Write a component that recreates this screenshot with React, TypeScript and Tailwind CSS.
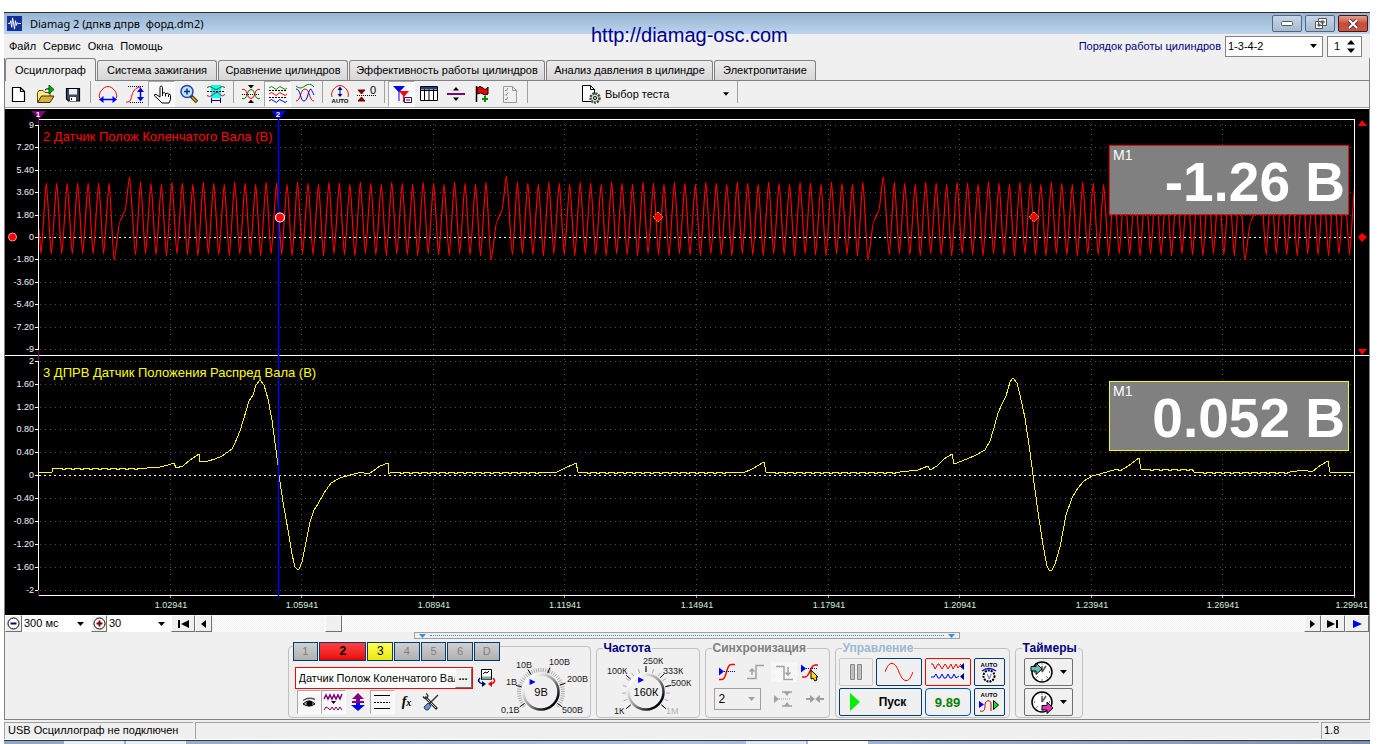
import type { ReactNode } from 'react'
import clsx from 'clsx'

const TABS = [
  { label: 'Осциллограф', width: 'w-[91px]' },
  { label: 'Система зажигания', width: 'w-[120px]' },
  { label: 'Сравнение цилиндров', width: 'w-[130px]' },
  { label: 'Эффективность работы цилиндров', width: 'w-[196px]' },
  { label: 'Анализ давления в цилиндре', width: 'w-[167px]' },
  { label: 'Электропитание', width: 'w-[102px]' },
]

const TIMES = ['1.02941', '1.05941', '1.08941', '1.11941', '1.14941', '1.17941', '1.20941', '1.23941', '1.26941']
const TIME_X = [170, 301, 433, 564, 696, 828, 959, 1091, 1222, 1354]

const TOP_SCALE = ['9', '7.20', '5.40', '3.60', '1.80', '0', '-1.80', '-3.60', '-5.40', '-7.20', '-9']
const TOP_Y = [125, 147, 170, 192, 215, 237, 259, 282, 304, 327, 349]
const BOTTOM_SCALE = ['2', '1.60', '1.20', '0.80', '0.40', '0', '-0.40', '-0.80', '-1.20', '-1.60', '-2']
const BOTTOM_Y = [361, 384, 407, 429, 452, 475, 498, 521, 544, 567, 590]

// crankshaft sensor: 36 teeth per turn, one missing
const TURN = 376.9
const TOOTH = TURN / 36

function crankPath() {
  const pts: [number, number][] = [[39, 229], [41, 254]]
  for (let k = -9; k < -2; k++) {
    const x = 140.5 + k * TOOTH
    pts.push([x, 183], [x + 5, k === -3 ? 260 : 254])
  }
  for (let turn = 0; turn < 4; turn++) {
    const start = 140.5 + turn * TURN
    pts.push([start - 20.5, 221], [start - 15.5, 211], [start - 11, 177 - (turn % 2)], [start - 5, 255])
    for (let k = 0; k < 34; k++) {
      const x = start + k * TOOTH
      pts.push([x, 182 + (k % 3)], [x + 5, k === 33 ? 260 : 254 + (k % 3)])
    }
  }
  let d = 'M39 229'
  for (let i = 1; i < pts.length; i++) {
    const [x0, y0] = pts[i - 1]
    const [x1, y1] = pts[i]
    if (x1 > 1355) break
    const dx = (x1 - x0) * 0.2
    d += `C${x0 + dx} ${y0} ${x1 - dx} ${y1} ${x1} ${y1}`
  }
  return d
}

const CAM_POINTS: [number, number][] = [
  [39, 472], [52, 472], [53, 468], [147, 468], [160, 467], [168, 465], [174, 463], [176, 468], [183, 466], [190, 460],
  [199, 454], [200, 462], [208, 461], [215, 459], [222, 456], [232, 449], [235, 443], [240, 431], [244, 418], [249, 401],
  [253, 395], [256, 385], [260, 380], [264, 385], [268, 399], [272, 420], [275, 443], [278, 465], [279, 475], [283, 502],
  [288, 530], [292, 554], [295, 567], [297, 569], [299, 569], [302, 562], [306, 542], [310, 522], [314, 510], [318, 504],
  [324, 493], [331, 483], [340, 478], [350, 475], [362, 472], [366, 474], [370, 473], [376, 469], [380, 466], [388, 463],
  [389, 474], [391, 472], [548, 472], [555, 473], [563, 469], [576, 463], [578, 472], [735, 472], [743, 473], [752, 469],
  [764, 462], [766, 472], [900, 472], [918, 470], [928, 466], [930, 470], [937, 466], [944, 459], [952, 454], [954, 464],
  [962, 461], [974, 456], [985, 450], [990, 441], [994, 428], [998, 413], [1002, 404], [1006, 396], [1010, 382], [1013, 378],
  [1017, 383], [1020, 395], [1025, 418], [1030, 452], [1033, 475], [1038, 512], [1043, 545], [1047, 566], [1049, 570],
  [1052, 570], [1055, 564], [1060, 547], [1066, 515], [1072, 498], [1078, 488], [1084, 481], [1092, 476], [1100, 474],
  [1117, 469], [1120, 471], [1128, 466], [1139, 458], [1141, 469], [1192, 469], [1194, 472], [1290, 472], [1304, 470],
  [1312, 472], [1318, 467], [1328, 461], [1330, 472], [1355, 472],
]

function camPath() {
  let d = 'M39 472'
  for (let i = 1; i < CAM_POINTS.length; i++) {
    const [x0] = CAM_POINTS[i - 1]
    const [x1, y1] = CAM_POINTS[i]
    // long flat stretches carry one pixel of noise
    if (x1 - x0 > 30) {
      for (let x = x0 + 9; x < x1 - 4; x += 9) d += `H${x}v1h3v-1`
    }
    d += `L${x1} ${y1}`
  }
  return d
}

function Readout({ y, color, value }: { y: number; color: string; value: string }) {
  return (
    <g>
      <rect x="1109.5" y={y + 0.5} width="239" height="69" fill="#808080" stroke={color} shapeRendering="crispEdges" />
      <text x="1113" y={y + 15} fontSize="14" fill="#fff">M1</text>
      <text x="1345" y={y + 56} fontSize="55" fontWeight="bold" fill="#fff" textAnchor="end">{value}</text>
    </g>
  )
}

function Scope() {
  return (
    <svg viewBox="5 109 1364 506" className="block w-full h-auto bg-black" fontFamily="Liberation Sans, sans-serif">
      <g stroke="#505050" strokeDasharray="1 4" shapeRendering="crispEdges">
        {[...TOP_Y, ...BOTTOM_Y].map((y) => <path key={y} d={`M40 ${y + 0.5}H1354`} />)}
        {TIME_X.slice(0, 9).map((x) => <path key={x} d={`M${x + 0.5} 124V595`} />)}
      </g>
      <g stroke="#fff" strokeDasharray="2 3" shapeRendering="crispEdges">
        <path d="M39 237.5H1354M39 475.5H1354" />
      </g>

      <path d={crankPath()} stroke="#f00" fill="none" strokeWidth="1.2" />
      <path d={camPath()} stroke="#ff0" fill="none" shapeRendering="crispEdges" />

      <g stroke="#fff" shapeRendering="crispEdges" fill="none">
        <path d="M38.5 595.5V119.5H1354.5V595.5zM5 355.5H1369" />
        {[...TOP_Y, ...BOTTOM_Y].map((y) => <path key={y} d={`M35 ${y + 0.5}h4`} />)}
        {TIME_X.map((x) => <path key={x} d={`M${x + 0.5} 596v2`} stroke="#a0a0a0" />)}
      </g>
      <path d="M38.5 112V125M38.5 350V361M38.5 590V596" stroke="#800080" />
      <path d="M278.5 112V596" stroke="#00f" strokeWidth="1.5" />
      <path d="M31 111h15l-7 8z" fill="#800080" />
      <path d="M271 111h15l-7 8z" fill="#00f" />
      <g fill="#fff" fontSize="8" fontWeight="bold" textAnchor="middle">
        <text x="38" y="117">1</text>
        <text x="278" y="117">2</text>
      </g>

      <g fontSize="9" fill="#f0f4fa" textAnchor="end">
        {TOP_SCALE.map((t, i) => <text key={t} x="34" y={TOP_Y[i] + 3}>{t}</text>)}
        {BOTTOM_SCALE.map((t, i) => <text key={t} x="34" y={BOTTOM_Y[i] + 3}>{t}</text>)}
      </g>
      <g fontSize="9" fill="#d4f0dc" textAnchor="middle">
        {TIMES.map((t, i) => <text key={t} x={TIME_X[i] + 1} y="608">{t}</text>)}
        <text x="1368" y="608" textAnchor="end">1.29941</text>
      </g>
      <text x="43" y="141" fontSize="13" fill="#f00">2 Датчик Полож Коленчатого Вала (В)</text>
      <text x="43" y="377" fontSize="13" fill="#ff0">3 ДПРВ Датчик Положения Распред Вала (В)</text>

      <circle cx="12.5" cy="237" r="4" fill="#f00" stroke="#f99" />
      <circle cx="280" cy="217.5" r="4.5" fill="#f00" stroke="#fff" strokeWidth="1.2" />
      <path d="M658 212l5 5-5 5-5-5zM1034 212l5 5-5 5-5-5z" fill="#e00" stroke="#fa0" strokeDasharray="2 1" />
      <path d="M1358 126l4-6 5 6zM1358 237l4-4 5 4-5 5zM1358 349h9l-5 6z" fill="#f00" />

      <Readout y={145} color="#f00" value="-1.26 В" />
      <Readout y={381} color="#ff0" value="0.052 В" />
    </svg>
  )
}

function Icon({ children, w = 20, h = 20 }: { children: ReactNode; w?: number; h?: number }) {
  return (
    <svg width={w} height={h} viewBox={`0 0 ${w} ${h}`} fill="none" stroke="#000" className="shrink-0" aria-hidden="true">
      {children}
    </svg>
  )
}

function Arrow({ className }: { className?: string }) {
  return (
    <svg width="7" height="4" viewBox="0 0 7 4" className={className} fill="currentColor" aria-hidden="true">
      <path d="M0 0h7L3.5 4z" />
    </svg>
  )
}

const PRESSED = 'bg-[#f8f8f8] border border-t-[#a8a8a8] border-l-[#a8a8a8] border-r-white border-b-white'

function ToolButton({ label, pressed, children }: { label: string; pressed?: boolean; children: ReactNode }) {
  return (
    <button aria-label={label} className={clsx('w-[27px] h-[26px] flex items-center justify-center', pressed && PRESSED)}>
      {children}
    </button>
  )
}

function Separator() {
  return <div className="w-2 flex justify-center"><div className="w-px h-[22px] bg-[#a0a0a0]" /></div>
}

function Toolbar() {
  return (
    <div className="h-[28px] flex border-b border-white">
      <div className="flex-1 flex items-start border-b border-[#a0a0a0]">
        <ToolButton label="Новый">
          <Icon><path d="M3.5 3.5h8l4 4v10h-12zM11.5 3.5v4h4" fill="#fff" strokeWidth="1.2" /></Icon>
        </ToolButton>
        <ToolButton label="Открыть">
          <Icon>
            <path d="M1.5 18V8.5l1.5-2h4l2 2h5V12" fill="#ffe98a" stroke="#5c4a00" />
            <path d="M1.5 18.5L5.5 12H18l-4 6.5z" fill="#d9b23c" stroke="#3a2e00" />
            <path d="M13 1l5 4.5-5 4.5z" fill="#0a0" stroke="#060" />
            <path d="M9 6q2-2 4-1" />
          </Icon>
        </ToolButton>
        <ToolButton label="Сохранить">
          <Icon>
            <path d="M3.5 4.5h13v12.5h-11l-2-2z" fill="#3c4a5c" strokeWidth="1.2" />
            <path d="M6 5h8v5.5H6z" fill="#e8eef4" stroke="none" />
            <path d="M7 13h6v4H7z" fill="#fff" stroke="none" />
            <path d="M8.5 14v2" />
          </Icon>
        </ToolButton>
        <Separator />
        <ToolButton label="Измерение периода">
          <Icon>
            <path d="M1.5 14C0 8 6 2.5 10 2.5S20 8 18.5 14" stroke="#f00" />
            <path d="M3 15.5h14" stroke="#00c" strokeWidth="1.5" />
            <path d="M1 15.5l4.5-3.5v7zM19 15.5l-4.5-3.5v7z" fill="#00f" stroke="none" />
          </Icon>
        </ToolButton>
        <ToolButton label="Измерение амплитуды">
          <Icon>
            <path d="M3 2.5h16M5 18.5h14" strokeDasharray="1 1" />
            <path d="M1 18c5 1 5-4 6-7s3-8 9-8" stroke="#f00" />
            <path d="M15.5 6v9" stroke="#00c" strokeWidth="1.5" />
            <path d="M15.5 3.5l3.5 4.5h-7zM15.5 17.5l3.5-4.5h-7z" fill="#00f" stroke="none" />
          </Icon>
        </ToolButton>
        <ToolButton label="Рука" pressed>
          <Icon>
            <path d="M8 13V3.5q0-1.5 1.2-1.5T10.5 3.5V9q3-1 3 .5 3-.8 3 .7 2-.5 2 1.3v4l-1.5 3.5h-7L5 14l-2.5-2q-.5-2 1.5-1.7L8 13M10.5 9v3M13.5 9.5v3M16.5 10.5v2.5" fill="#fff" />
          </Icon>
        </ToolButton>
        <ToolButton label="Увеличить">
          <Icon>
            <path d="M12 12l6 6" stroke="#3a2e00" strokeWidth="3.5" />
            <path d="M13 13l4.5 4.5" stroke="#e0b040" strokeWidth="1.5" />
            <circle cx="8" cy="7.5" r="6" fill="#bfe0ff" stroke="#26489a" strokeWidth="1.5" />
            <path d="M5 7.5h6M8 4.5v6" stroke="#003080" strokeWidth="1.5" />
          </Icon>
        </ToolButton>
        <ToolButton label="Линейка">
          <Icon>
            <path d="M5 1h10v13H5z" fill="#0ff" stroke="none" />
            <path d="M1 3.5q3-2 5 0t4 2 4-2 5 0" stroke="#060" />
            <path d="M1 11.5q3 2 5 0t4-3 4 2 5 0" stroke="#f00" />
            <path d="M1 7.5h18" strokeDasharray="2 1" />
            <path d="M5.5 14v5M14.5 14v5M5 16.5h9" stroke="#006" />
          </Icon>
        </ToolButton>
        <Separator />
        <ToolButton label="Совместить нули">
          <Icon>
            <path d="M1 14.5q4 1 5-4t4-5 4 5 5 4" stroke="#080" />
            <path d="M1 5.5q4-1 5 4t4 5 4-5 5-4" stroke="#f00" />
            <path d="M1 10.5h18" strokeDasharray="1 1" />
            <path d="M7 1h6l-3 3.5zM7 19h6l-3-3.5z" fill="#000" stroke="none" />
          </Icon>
        </ToolButton>
        <ToolButton label="Разделить каналы" pressed>
          <Icon>
            <path d="M1 4q2.5-3 5 0t4 0 4.5 0 4.5 0" stroke="#080" />
            <path d="M1 10q2.5-3 5 0t4 0 4.5 0 4.5 0" stroke="#f00" />
            <path d="M1 17q2.5-3 5 0t4 0 4.5 0 4.5 0" stroke="#00f" />
            <path d="M1 6.5h18M1 13.5h18" strokeDasharray="2 1" />
          </Icon>
        </ToolButton>
        <ToolButton label="Наложить каналы">
          <Icon>
            <path d="M1 2q4 4 9 0t9 1" stroke="#080" />
            <path d="M1 17C6 17 5 5 10 5s4 12 9 12" stroke="#f00" />
            <path d="M1 5c5 0 4 12 8 12S13 5 16 5t3 6" stroke="#00f" />
          </Icon>
        </ToolButton>
        <Separator />
        <ToolButton label="Автомасштаб">
          <Icon>
            <path d="M2 13C0 7 6 1.5 10 1.5S20 7 18 13" stroke="#f00" />
            <path d="M10 5v7" stroke="#006" />
            <path d="M7.5 6L10 2.5 12.5 6zM7.5 10h5L10 13z" fill="#008" stroke="none" />
            <text x="10" y="19" fontSize="6" fontWeight="bold" textAnchor="middle" fill="#000" stroke="none">AUTO</text>
          </Icon>
        </ToolButton>
        <ToolButton label="Обнулить">
          <Icon w={22}>
            <path d="M2 6h7l-3.5 4zM2 17h7l-3.5-4z" fill="#800000" stroke="#800000" />
            <path d="M1 11.5h20" strokeDasharray="1 1" />
            <text x="14" y="10" fontSize="11" fill="#000" stroke="none">0</text>
          </Icon>
        </ToolButton>
        <Separator />
        <ToolButton label="Маркеры" pressed>
          <Icon>
            <path d="M1 2h12L7 8.5z" fill="#00f" stroke="none" />
            <path d="M7 8v9" stroke="#00f" />
            <path d="M7 7h10l-5 6z" fill="#f00" stroke="none" />
            <path d="M11.5 12v6" stroke="#f00" />
            <path d="M12.5 13.5h7v5h-7zM14 16h4" fill="#fff" stroke="#406" />
          </Icon>
        </ToolButton>
        <ToolButton label="Таблица">
          <Icon>
            <path d="M1.5 2.5h17v14h-17zM5.5 3v13M10 3v13M14.5 3v13M2 6.5h16" fill="#fff" />
            <path d="M2 3h16v2.5H2z" fill="#204080" stroke="none" />
          </Icon>
        </ToolButton>
        <ToolButton label="Разделитель">
          <Icon>
            <path d="M1 10h18" stroke="#800080" strokeWidth="2" />
            <path d="M10 3l3 3.5H7zM10 17l3-3.5H7z" fill="#000" stroke="none" />
          </Icon>
        </ToolButton>
        <ToolButton label="Добавить метку">
          <Icon>
            <path d="M3.5 2v16" strokeWidth="1.5" />
            <path d="M4 4q3-3 6 0t5-1v7q-3 2-5 0t-6 0z" fill="#e00" />
            <path d="M9 15h6M12 12v6" stroke="#080" strokeWidth="2" />
          </Icon>
        </ToolButton>
        <ToolButton label="Отчёт">
          <Icon>
            <path d="M3.5 2.5h9l4 4v12h-13zM12.5 2.5v4h4" stroke="#999" />
            <path d="M5 6l1 1 2-3M5 10.5l1 1 2-3M5 15l1 1 2-3" stroke="#888" />
          </Icon>
        </ToolButton>
        <Separator />
        <button className="ml-[50px] w-[152px] h-[26px] flex items-center gap-1 text-left">
          <Icon>
            <path d="M1.5 1.5h8l4 4v12h-12zM9.5 1.5v4h4" fill="#fff" />
            <circle cx="14" cy="14" r="4.5" fill="#cfe0cf" strokeWidth="2.5" stroke="#404840" strokeDasharray="2 1" />
            <circle cx="14" cy="14" r="1.5" fill="#fff" />
          </Icon>
          <span className="flex-1">Выбор теста</span>
          <Arrow className="mr-1 w-[6px]" />
        </button>
        <Separator />
      </div>
    </div>
  )
}

function TitleBar() {
  return (
    <header className="h-[22px] border-t border-[#303030] bg-linear-to-b from-[#98b4d2] to-[#bcd4ec] flex items-center pl-[3px] pr-[2px] gap-2">
      <svg width="15" height="15" viewBox="0 0 16 16">
        <rect width="16" height="16" fill="#12309a" />
        <path d="M1 8h2l1-3 1 7 1-10 2 12 1-9 1 5 1-3 1 1h3" stroke="#fff" fill="none" />
      </svg>
      <span className="flex-1 font-['Noto_Sans',sans-serif] text-[11px] whitespace-pre">Diamag 2 (дпкв дпрв  форд.dm2)</span>
      <div className="flex gap-[3px]">
        <button aria-label="Свернуть" className="w-[30px] h-[17px] rounded-[2px] border border-[#54677c] bg-linear-to-b from-[#c8d6e6] to-[#a4bad2] flex items-center justify-center">
          <svg width="12" height="5" viewBox="0 0 12 5"><rect x=".5" y=".5" width="11" height="4" rx="1" fill="#fff" stroke="#555" /></svg>
        </button>
        <button aria-label="Восстановить" className="w-[30px] h-[17px] rounded-[2px] border border-[#54677c] bg-linear-to-b from-[#c8d6e6] to-[#a4bad2] flex items-center justify-center">
          <svg width="13" height="11" viewBox="0 0 13 11" fill="#fff" stroke="#555"><path d="M4.5.5h8v7h-8zM7 3h3v2H7zM1.5 3.5h7v7h-7zM4 6h2v2H4z" /></svg>
        </button>
        <button aria-label="Закрыть" className="w-[30px] h-[17px] rounded-[2px] border border-[#4a1410] bg-linear-to-b from-[#e0a090] via-[#c84a38] to-[#c05a44] flex items-center justify-center">
          <svg width="12" height="10" viewBox="0 0 12 10"><path d="M2 1l8 8M10 1L2 9" stroke="#533" strokeWidth="4" /><path d="M2 1l8 8M10 1L2 9" stroke="#fff" strokeWidth="2" /></svg>
        </button>
      </div>
    </header>
  )
}

function MenuRow() {
  return (
    <div className="h-6 flex items-center pl-[5px] pr-2">
      <nav className="flex-1 flex gap-[7px]">
        {['Файл', 'Сервис', 'Окна', 'Помощь'].map((item) => <button key={item}>{item}</button>)}
      </nav>
      <label htmlFor="order" className="text-[#000080] mr-1">Порядок работы цилиндров</label>
      <div className="relative flex items-center mr-1">
        <select id="order" className="appearance-none w-[98px] h-[21px] bg-white border border-[#828282] pl-[2px]">
          <option>1-3-4-2</option>
        </select>
        <Arrow className="absolute right-[6px] pointer-events-none" />
      </div>
      <div className="w-[35px] h-[21px] bg-white border border-[#828282] flex items-center pl-[6px] pr-[6px]">
        <input aria-label="Цилиндр" defaultValue="1" className="min-w-0 flex-1 outline-none" />
        <svg width="8" height="13" viewBox="0 0 8 13"><path d="M0 4.5h8L4 0zM0 8.5h8L4 13z" /></svg>
      </div>
    </div>
  )
}

function Tabs() {
  return (
    <div role="tablist" className="h-[23px] flex items-end gap-px border-b border-[#828282]">
      {TABS.map((tab, i) => (
        <button
          key={tab.label}
          role="tab"
          aria-selected={i === 0}
          className={clsx(
            tab.width,
            'whitespace-nowrap rounded-t-[3px] border border-b-0 border-[#828282]',
            i === 0 ? 'h-[23px] -mb-px bg-[#f0f0f0]' : 'h-5 bg-linear-to-b from-[#ececec] to-[#d6d6d6]',
          )}
        >
          {tab.label}
        </button>
      ))}
    </div>
  )
}

const RAISED = 'bg-[#f0f0f0] border border-t-white border-l-white border-r-[#707070] border-b-[#707070] flex items-center justify-center'
const DITHER = 'bg-[repeating-conic-gradient(#f0f0f0_0_25%,#ffffff_0_50%)] bg-[length:2px_2px]'

function ScrollRow() {
  return (
    <div className="h-[17px] flex">
      <button aria-label="Уменьшить" className={clsx(RAISED, 'w-[17px]')}>
        <svg width="13" height="13" viewBox="0 0 13 13" fill="#fff" stroke="#000"><circle cx="6.5" cy="6.5" r="5.5" /><path d="M3.5 6.5h6" stroke="#000080" strokeWidth="2" /></svg>
      </button>
      <div className="relative flex items-center">
        <select aria-label="Развёртка" className="appearance-none w-[69px] h-full bg-white pl-[2px] text-[11px] leading-none"><option>300 мс</option></select>
        <Arrow className="absolute right-[7px] pointer-events-none" />
      </div>
      <button aria-label="Увеличить" className={clsx(RAISED, 'w-[16px]')}>
        <svg width="13" height="13" viewBox="0 0 13 13" fill="#fff" stroke="#000"><circle cx="6.5" cy="6.5" r="5.5" /><path d="M3.5 6.5h6M6.5 3.5v6" stroke="#800000" strokeWidth="2" /></svg>
      </button>
      <div className="relative flex items-center">
        <select aria-label="Масштаб" className="appearance-none w-[64px] h-full bg-white pl-[2px] text-[11px] leading-none"><option>30</option></select>
        <Arrow className="absolute right-[6px] pointer-events-none" />
      </div>
      <button aria-label="В начало" className={clsx(RAISED, 'w-[24px]')}>
        <svg width="12" height="8" viewBox="0 0 12 8"><path d="M1 0h2v8H1zM12 0v8L4 4z" /></svg>
      </button>
      <button aria-label="Назад" className={clsx(RAISED, 'w-[17px]')}>
        <svg width="5" height="8" viewBox="0 0 5 8"><path d="M5 0v8L0 4z" /></svg>
      </button>
      <div className={clsx('flex-1 flex pl-[113px]', DITHER)}>
        <div className={clsx(RAISED, 'w-[17px]')} />
      </div>
      <button aria-label="Вперёд" className={clsx(RAISED, 'w-[17px]')}>
        <svg width="5" height="8" viewBox="0 0 5 8"><path d="M0 0v8l5-4z" /></svg>
      </button>
      <button aria-label="В конец" className={clsx(RAISED, 'w-[24px]')}>
        <svg width="12" height="8" viewBox="0 0 12 8"><path d="M9 0h2v8H9zM0 0v8l8-4z" /></svg>
      </button>
      <button aria-label="Воспроизвести" className={clsx(RAISED, 'w-[24px]')}>
        <svg width="9" height="8" viewBox="0 0 9 8" fill="#00f"><path d="M0 0v8l9-4z" /></svg>
      </button>
    </div>
  )
}

interface KnobProps {
  label: string
  value: string
  cx: number
  cy: number
  width: number
  needle: number
  major: number[]
  marks: { x: number; y: number; text: string; muted?: boolean }[]
  minor: number
}

function Knob({ label, value, cx, cy, width, needle, major, marks, minor }: KnobProps) {
  const ray = (deg: number, r0: number, r1: number) => {
    const a = (deg * Math.PI) / 180
    return `M${cx + r0 * Math.sin(a)} ${cy - r0 * Math.cos(a)}L${cx + r1 * Math.sin(a)} ${cy - r1 * Math.cos(a)}`
  }
  const ticks = Array.from({ length: minor + 1 }, (_, i) => -130 + (260 * i) / minor)
  const a = (needle * Math.PI) / 180
  return (
    <label className="relative block">
      <input type="range" aria-label={label} className="sr-only" />
      <svg width={width} height="70" viewBox={`0 0 ${width} 70`} fontFamily="Liberation Sans, sans-serif" className="block">
        <defs>
          <linearGradient id={label} x1="0" y1="0" x2="1" y2="1">
            <stop offset="0.15" stopColor="#fff" />
            <stop offset="0.5" stopColor="#999" />
            <stop offset="0.85" stopColor="#000" />
          </linearGradient>
        </defs>
        <path d={ticks.map((t) => ray(t, 20, 24)).join('')} stroke="#a8a8a8" />
        <path d={major.map((t) => ray(t, 20, 26)).join('')} stroke="#000" />
        <circle cx={cx} cy={cy} r="17.5" fill="#f0f0f0" stroke={`url(#${label})`} strokeWidth="2.5" />
        <path
          d="M-3-3L3 0L-3 3z"
          fill="#00f"
          transform={`translate(${cx + 13 * Math.sin(a)} ${cy - 13 * Math.cos(a)})`}
        />
        <text x={cx} y={cy + 4} fontSize="11" textAnchor="middle">{value}</text>
        {marks.map((m) => <text key={m.text} x={m.x} y={m.y} fontSize="9" fill={m.muted ? '#b0b0b0' : '#222'}>{m.text}</text>)}
      </svg>
    </label>
  )
}

const CHANNELS = ['1', '2', '3', '4', '5', '6', 'D']

function ChannelPanel() {
  return (
    <section className="w-[303px] mt-[7px] h-[72px] rounded-[4px] border border-[#c0c0c0] flex">
      <div className="w-[211px] pl-1">
        <div className="-mt-[5px] flex gap-px bg-[#f0f0f0]">
          {CHANNELS.map((c) => (
            <button
              key={c}
              className={clsx(
                'h-[19px] border border-[#003c74]',
                c === '2' && 'w-[48px] bg-linear-to-b from-[#ff4040] to-[#e80000] font-bold text-[12px]',
                c === '3' && 'w-[26px] bg-linear-to-b from-[#ffff50] to-[#e8e800] text-[12px]',
                c !== '2' && c !== '3' && 'w-[26px] bg-linear-to-b from-[#d0d0d0] to-[#b0b0b0] text-[#808080]',
              )}
            >
              {c}
            </button>
          ))}
        </div>
        <div className="mt-[6px] pl-[2px] flex items-center gap-1">
          <div className="w-[178px] h-[22px] border border-[#f00] bg-white flex">
            <input aria-label="Имя канала" defaultValue="Датчик Полож Коленчатого Вала" className="min-w-0 flex-1 pl-[3px] outline-none text-[11px]" />
            <button aria-label="Выбрать датчик" className={clsx(RAISED, 'w-[17px] pb-1 font-bold')}>...</button>
          </div>
          <button aria-label="Прибор">
            <Icon>
              <path d="M4.5 1.5h10v10h-10z" fill="#fff" />
              <path d="M5 8.5h9v3H5z" fill="#7a9" stroke="none" />
              <path d="M6 6l2-2 2 1 2-2" />
              <path d="M3 10q-4 4 3 6" stroke="#006" strokeWidth="1.5" />
              <path d="M5 13l4 3-4 3z" fill="#006" stroke="none" />
              <path d="M16 10q4 4-2 6" stroke="#e00" strokeWidth="1.5" />
              <path d="M15 13l-4 3 4 3z" fill="#e00" stroke="none" />
            </Icon>
          </button>
        </div>
        <div className="pl-[4px] pt-[1px] flex items-center">
          <button aria-label="Показать" className={clsx('w-6 h-6 flex items-center justify-center', PRESSED)}>
            <Icon>
              <path d="M4 8.5q6-4 12-1" stroke="#555" strokeWidth="1.5" />
              <path d="M4 12q6-6 12 0-6 4-12 0z" fill="#aaa" />
              <circle cx="10.5" cy="11.5" r="2.5" fill="#000" />
            </Icon>
          </button>
          <button aria-label="Фильтр" className={clsx('w-[25px] h-6 flex items-center justify-center', PRESSED)}>
            <Icon>
              <path d="M1 7l2-4 2 4 2-4 2 4 2-4 2 4 2-4 2 4 2-5" stroke="#800080" strokeWidth="1.5" />
              <path d="M8 9h5l-2.5 3z" fill="#000" stroke="none" />
              <path d="M1 18l2-3 2 1 2 2 2-3 2 3 2-3 2 3 2-3 2 3" stroke="#800080" />
            </Icon>
          </button>
          <button aria-label="Сдвиг" className="w-6 h-6 flex items-center justify-center">
            <Icon>
              <path d="M10 1l6 6h-4v3H8V7H4z" fill="#800080" stroke="none" />
              <path d="M10 19l7-6h-5v-3H8v3H3z" fill="#00f" stroke="none" />
              <path d="M4 10h12" stroke="#800080" strokeWidth="2" />
            </Icon>
          </button>
          <button aria-label="Уровни" className={clsx('w-[25px] h-6 flex items-center justify-center', PRESSED)}>
            <Icon>
              <path d="M2 3.5h16M2 16.5h16" />
              <path d="M2 10.5h16" strokeDasharray="2 1" />
            </Icon>
          </button>
          <button aria-label="Функция" className="w-6 h-6 font-['Liberation_Serif',serif] italic font-bold text-[14px]">
            f<span className="text-[10px]">x</span>
          </button>
          <button aria-label="Настройки" className="w-6 h-6 flex items-center justify-center">
            <Icon>
              <path d="M4 5l12 12" stroke="#222" strokeWidth="2.5" />
              <path d="M5 6l10 10" stroke="#ddd" />
              <path d="M2 4.5q2 3 4 1t-1-4" stroke="#333" strokeWidth="1.5" />
              <path d="M17 3L8 12" stroke="#333" strokeWidth="1.5" />
              <path d="M3 15l4-4 3 3-3 4q-3 1-4-3z" fill="#6f93c8" stroke="#246" />
            </Icon>
          </button>
        </div>
      </div>
      <Knob
        label="voltage"
        value="9В"
        cx={41}
        cy={45}
        width={90}
        needle={-40}
        major={[-125, -75, -30, 20, 70, 125]}
        minor={44}
        marks={[
          { x: 16, y: 21, text: '10В' },
          { x: 49, y: 18, text: '100В' },
          { x: 6, y: 38, text: '1В' },
          { x: 67, y: 35, text: '200В' },
          { x: 1, y: 66, text: '0,1В' },
          { x: 62, y: 66, text: '500В' },
        ]}
      />
    </section>
  )
}

function Group({ title, color, className, children }: { title: string; color: string; className: string; children: ReactNode }) {
  return (
    <fieldset className={clsx('h-[76px] mt-[3px] rounded-[4px] border border-[#c0c0c0]', className)}>
      <legend className={clsx('ml-[6px] px-px h-[13px] text-[12px] leading-[13px] font-bold', color)}>{title}</legend>
      {children}
    </fieldset>
  )
}

const XP_BUTTON = 'rounded-[2px] border bg-[#f0f0f0] flex items-center justify-center'

function ControlDeck() {
  return (
    <div className="flex justify-center gap-[5px] h-[80px] pr-1">
      <ChannelPanel />

      <Group title="Частота" color="text-[#000080]" className="w-[104px]">
        <div className="-mt-1">
          <Knob
            label="frequency"
            value="160К"
            cx={49}
            cy={41}
            width={102}
            needle={-22}
            major={[-130, -50, 0, 45, 75, 130]}
            minor={14}
            marks={[
              { x: 10, y: 23, text: '100К' },
              { x: 46, y: 13, text: '250К' },
              { x: 66, y: 23, text: '333К' },
              { x: 74, y: 35, text: '500К' },
              { x: 17, y: 63, text: '1К' },
              { x: 69, y: 63, text: '1М', muted: true },
            ]}
          />
        </div>
      </Group>

      <Group title="Синхронизация" color="text-[#808080]" className="w-[125px]">
        <div className="flex pl-2 pt-[7px]">
          <button aria-label="Уровень" className="w-[27px] flex justify-center">
            <Icon>
              <path d="M2 17.5h3c5 0 4-15 9-15h4" stroke="#f00" strokeWidth="1.5" />
              <path d="M5 9.5h13" stroke="#000080" strokeDasharray="1 1" />
              <path d="M2 5.5l5 4-5 4z" fill="#00f" stroke="none" />
            </Icon>
          </button>
          <button aria-label="Фронт" className="w-[30px] flex justify-center">
            <Icon>
              <path d="M1 16.5h9v-13h8M6 13V7M3.5 9.5L6 7l2.5 2.5" stroke="#a0a0a0" strokeWidth="1.5" />
            </Icon>
          </button>
          <button aria-label="Спад" className={clsx('w-[26px] flex justify-center', DITHER)}>
            <Icon>
              <path d="M2 4.5h8v13h9M14 5v8M11.5 10.5L14 13l2.5-2.5" stroke="#a0a0a0" strokeWidth="1.5" />
            </Icon>
          </button>
          <button aria-label="Ручная синхронизация" className="w-[26px] flex justify-center">
            <Icon>
              <path d="M2 15h3c5 0 5-12 10-12h3" stroke="#f00" strokeWidth="1.5" />
              <path d="M4 6.5h13" stroke="#000080" strokeDasharray="1 1" />
              <path d="M1 2.5l5 4-5 4z" fill="#00f" stroke="none" />
              <path d="M11 8v9l2-1 2 3 2-1-1-3h2z" fill="#fd0" />
            </Icon>
          </button>
        </div>
        <div className="flex items-center pl-2 pt-[6px]">
          <div className="relative flex items-center">
            <select aria-label="Канал синхронизации" className="appearance-none w-[47px] h-[22px] border border-[#a0a0a0] pl-1 text-[12px]"><option>2</option></select>
            <Arrow className="absolute right-[6px] pointer-events-none text-[#a0a0a0]" />
          </div>
          <button aria-label="Гистерезис" className="w-[44px] flex justify-center">
            <Icon>
              <path d="M9 3h10M9 17h10" stroke="#a0a0a0" strokeWidth="1.5" />
              <path d="M4 10h14" stroke="#a0a0a0" strokeDasharray="1 1" />
              <path d="M1 6l5 4-5 4zM11 3h6l-3 4zM11 17h6l-3-4z" fill="#a0a0a0" stroke="none" />
            </Icon>
          </button>
          <button aria-label="Сжать">
            <Icon>
              <path d="M1 10h5M14 10h5" stroke="#a0a0a0" strokeWidth="2" />
              <path d="M5 6l5 4-5 4zM15 6l-5 4 5 4z" fill="#a0a0a0" stroke="none" />
            </Icon>
          </button>
        </div>
      </Group>

      <Group title="Управление" color="text-[#9db8d2]" className="w-[175px]">
        <div className="grid grid-cols-[34px_46px_46px_31px] grid-rows-[28px_28px] gap-x-[3px] gap-y-[2px] pl-[3px] pt-[3px]">
          <button aria-label="Пауза" className={clsx(XP_BUTTON, 'border-[#c8c8c8]')}>
            <svg width="12" height="16" viewBox="0 0 12 16" fill="#c0c0c0" stroke="#888"><path d="M.5.5h4v15h-4zM7.5.5h4v15h-4z" /></svg>
          </button>
          <button aria-label="Один сигнал" className={clsx(XP_BUTTON, 'border-[#003c74]')}>
            <svg width="28" height="18" viewBox="0 0 28 18" fill="none" stroke="#f00"><path d="M0 9C3 2 4 .5 7 .5S12 4 14 9s4 8.5 7 8.5S25 16 28 9" /></svg>
          </button>
          <button aria-label="Непрерывно" className={clsx(XP_BUTTON, 'border-[#f00]')}>
            <svg width="34" height="20" viewBox="0 0 34 20" fill="none">
              <path d="M0 2h2l2 5 3-5h1l3 5 3-5 1 1 2 4 3-5 2 5 3-5 2 4 3-4" stroke="#f00" />
              <path d="M0 15h3l2-3 2 4h2l2-4 2 4h2l2-4 2 4h2l2-4 2 4 3-2" stroke="#00f" />
              <path d="M33 1v7l-4-3.5zM33 11v7l-4-3.5z" fill="#000080" />
            </svg>
          </button>
          <button aria-label="Автонастройка" className={clsx(XP_BUTTON, 'border-[#003c74]')}>
            <Icon w={22} h={24}>
              <text x="11" y="7" fontSize="6" fontWeight="bold" textAnchor="middle" fill="#000" stroke="none">AUTO</text>
              <path d="M4 11q7-5 14 0" stroke="#00f" strokeWidth="1.5" />
              <circle cx="11" cy="16" r="5.5" fill="#fff" strokeWidth="2" strokeDasharray="2 1" />
              <text x="11" y="19" fontSize="7" textAnchor="middle" fill="#00f" stroke="none">V</text>
            </Icon>
          </button>
          <button className={clsx(XP_BUTTON, 'col-span-2 border-[#003c74] text-[12px] font-bold')}>
            <svg width="10" height="18" viewBox="0 0 10 18" className="mr-[19px]"><path d="M0 0v18l10-9z" fill="#0e0" /></svg>
            <span className="pr-1">Пуск</span>
          </button>
          <button className={clsx(XP_BUTTON, 'border-[#0058b0] rounded-[4px] text-[13px] font-bold text-[#008000]')}>9.89</button>
          <button aria-label="Автозапуск" className={clsx(XP_BUTTON, 'border-[#003c74]')}>
            <Icon w={22} h={24}>
              <text x="11" y="7" fontSize="6" fontWeight="bold" textAnchor="middle" fill="#000" stroke="none">AUTO</text>
              <path d="M2 21c4 1 5-1 5-6s6-6 6-1v7" stroke="#c00" />
              <path d="M1 11l5 3.5-5 3.5z" fill="#00f" stroke="none" />
              <path d="M15.5 10.5v9l5-4.5z" fill="#0e0" />
            </Icon>
          </button>
        </div>
      </Group>

      <Group title="Таймеры" color="text-[#000080]" className="w-[68px]">
        <div className="flex flex-col gap-[2px] pl-2 pt-[3px]">
          {['Таймер запуска', 'Таймер остановки'].map((name, i) => (
            <button key={name} aria-label={name} className={clsx(XP_BUTTON, 'w-[49px] h-[28px] gap-[5px] border-[#707070]')}>
              <Icon w={25} h={25}>
                <circle cx="12" cy="12" r="10" fill="#fff" strokeWidth="1.5" />
                <path d="M12 12V6M12 12l4-6" stroke="#555" strokeWidth="1.5" />
                <path d="M12 3.5v1M12 19.5v1M20 12h-1M4 12h1M17.5 17.5l-1-1M6.5 17.5l1-1" />
                {i === 0
                  ? <path d="M1 6.5h5V3l6 6-6 5.5V11H1z" fill="#5fc0b8" />
                  : <path d="M12 15.5h5V12l6 6-6 5.5V20h-5z" fill="#e830c0" />}
              </Icon>
              <Arrow />
            </button>
          ))}
        </div>
      </Group>
    </div>
  )
}

function StatusBar() {
  return (
    <footer className="h-[20px] pt-[2px] flex gap-[2px] border-b border-white bg-[#f0f0f0]">
      <div className="w-[189px] border-t border-l border-[#a0a0a0] pl-[3px]">USB Осциллограф не подключен</div>
      <div className="flex-1 border-t border-l border-[#a0a0a0]" />
      <div className="w-[49px] border-t border-l border-[#a0a0a0] pl-[2px]">1.8</div>
    </footer>
  )
}

function Taskbar() {
  return (
    <div className="h-1 border-t border-[#303848] bg-linear-to-r from-[#8fa6c4] via-[#a8c0e0] to-[#7f90ae] flex gap-[2px] pl-[60px]">
      <div className="w-[60px] bg-[#e4ecf6]" />
      <div className="w-[60px] bg-[#e4ecf6]" />
      <div className="w-[556px]" />
      <div className="w-[60px] bg-[#dce6f2]" />
      <div className="w-[60px] bg-white" />
    </div>
  )
}

export default function App() {
  return (
    <div className="bg-white pt-3 pl-1 pr-3 font-['Liberation_Sans',Arial,sans-serif] text-[11px] leading-[15px] text-black">
      <div className="relative bg-[#f0f0f0]">
        <TitleBar />
        <a href="http://diamag-osc.com" className="absolute top-[11px] left-[587px] text-[20px] leading-6 text-[#000090]">
          http://diamag-osc.com
        </a>
        <MenuRow />
        <main className="border-x border-b border-[#828282]">
          <Tabs />
          <Toolbar />
          <Scope />
          <ScrollRow />
          <div className="mx-auto w-[546px] h-[7px] border border-[#a0a0a0] flex items-center px-1 gap-1">
            <Arrow className="text-[#3090f0]" />
            <div className="flex-1 h-px border-t border-dotted border-[#3090f0]" />
            <Arrow className="text-[#3090f0]" />
          </div>
          <ControlDeck />
        </main>
      </div>
      <StatusBar />
      <Taskbar />
    </div>
  )
}
